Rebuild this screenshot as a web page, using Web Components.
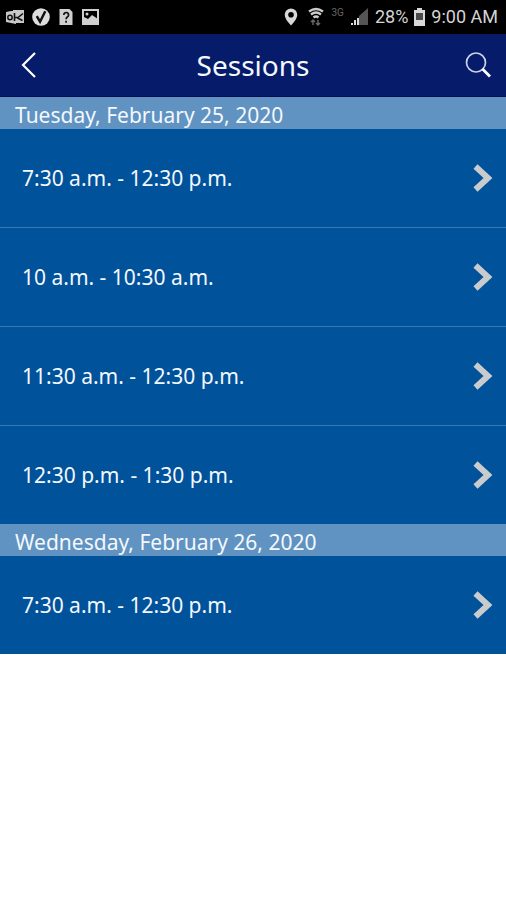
<!DOCTYPE html>
<html lang="en">
<head>
<meta charset="utf-8">
<meta name="viewport" content="width=device-width, initial-scale=1">
<title>Sessions</title>
<style>
  body { margin: 0; background: #fff; color: #f4f8fc; font-family: "Noto Sans", "Open Sans", sans-serif; }
</style>
</head>
<body>
<status-bar></status-bar>
<app-bar>Sessions</app-bar>
<main>
  <session-day>
    <span slot="date">Tuesday, February 25, 2020</span>
    <session-row>7:30 a.m. - 12:30 p.m.</session-row>
    <session-row>10 a.m. - 10:30 a.m.</session-row>
    <session-row>11:30 a.m. - 12:30 p.m.</session-row>
    <session-row>12:30 p.m. - 1:30 p.m.</session-row>
  </session-day>
  <session-day>
    <span slot="date">Wednesday, February 26, 2020</span>
    <session-row>7:30 a.m. - 12:30 p.m.</session-row>
  </session-day>
</main>
<script>
function define(name, html) {
  const template = document.createElement('template');
  template.innerHTML = html;
  customElements.define(name, class extends HTMLElement {
    constructor() {
      super();
      this.attachShadow({ mode: 'open' }).append(template.content.cloneNode(true));
    }
  });
}

define('status-bar', `
  <style>
    :host { display: flex; align-items: center; justify-content: space-between; height: 34px; padding: 0 8px 0 6px; box-sizing: border-box; background: #000; color: #d4d4d4; font: 18px/24px Roboto, sans-serif; white-space: nowrap; }
    .group { display: flex; align-items: center; }
    .left { gap: 8px; }
    svg { display: block; flex: none; }
    .net { font-size: 10px; line-height: 12px; color: #666; padding: 0 7px 8px 8px; }
    .wifi { margin-left: 10px; }
    .percent { margin-left: 6px; }
    .battery { margin: 0 5px; }
  </style>
  <div class="group left">
    <svg width="18" height="18" viewBox="0 0 18 18"><path d="M7 2h11v13H7zM0 4l10-2v14L0 14z" fill="#c8c8c8"/><circle cx="4" cy="9.500" r="2.200" fill="none" stroke="#111" stroke-width="1.500"/><path d="M8.500 5v8M17 5.500l-5 4H8.500M11.500 10l5 2.500" fill="none" stroke="#111" stroke-width="1.600"/></svg>
    <svg width="18" height="20" viewBox="0 0 19 20"><circle cx="9.500" cy="10" r="9.300" fill="#dedede"/><path d="M5 9l3.500 6L14 4" fill="none" stroke="#111" stroke-width="2.600"/></svg>
    <svg width="16" height="18" viewBox="5 0 16 18"><path d="M6.500 1h10l3 3v13h-13z" fill="#d0d0d0"/><path d="M10.800 7q.2-2.500 2.400-2.500t2.400 2.500q0 1.200-1.300 2-1.200.8-1.200 2.200M13.100 12.700v2" fill="none" stroke="#111" stroke-width="1.700"/></svg>
    <svg width="18" height="18" viewBox="0 0 18 18"><rect x="1" y="2" width="15" height="14" fill="none" stroke="#d0d0d0" stroke-width="2"/><path d="M2 14V9l4 2 4-4 6 4v4H2z" fill="#d0d0d0"/><circle cx="5" cy="6" r="1.500" fill="#d0d0d0"/></svg>
  </div>
  <div class="group">
    <svg width="14" height="18" viewBox="0 0 14 18"><path fill-rule="evenodd" d="M7 .5a6.300 6.300 0 0 1 6.300 6.300Q13.300 11 7 17.500.7 11 .7 6.800A6.300 6.300 0 0 1 7 .5zM7 4a2.800 2.800 0 1 0 0 5.600A2.800 2.800 0 0 0 7 4z" fill="#d8d8d8"/></svg>
    <svg class="wifi" width="16" height="20" viewBox="0 0 16 20"><path d="M1 4.500q7-5 14 0M3 7.500q5-4 10 0M5.500 10.500q2.500-2 5 0" fill="none" stroke="#ccc" stroke-width="2.300"/><path d="M5 18v-5M3 15l2-2 2 2M10 13v5M8 16l2 2 2-2" fill="none" stroke="#666" stroke-width="1.500"/></svg>
    <span class="net">3G</span>
    <svg width="18" height="18" viewBox="0 0 18 18"><path d="M8 8l9-8v17H8z" fill="#555"/><path d="M0 15h2v2H0zM3 12h2v5H3zM6 10h2v7H6z" fill="#ddd"/></svg>
    <span class="percent">28%</span>
    <svg class="battery" width="13" height="18" viewBox="0 0 13 18"><path d="M4 0h5v2h3v16H1V2h3z" fill="#d8d8d8"/><path d="M3 5h7v7H3z" fill="#4a4a4a"/></svg>
    <span>9:00 AM</span>
  </div>`);

define('app-bar', `
  <style>
    :host { display: grid; grid-template-columns: 56px 1fr 56px; align-items: center; height: 63px; box-sizing: border-box; background: #061c6a; border-bottom: 1px solid #040f58; }
    h1 { margin: 0; text-align: center; font-size: 28px; line-height: 36px; font-weight: 400; }
    button { display: flex; align-items: center; justify-content: center; height: 48px; padding: 0; border: 0; background: none; color: inherit; }
  </style>
  <button aria-label="Back"><svg width="18" height="28" viewBox="0 0 18 28"><path d="M16 2L4 14l12 12" fill="none" stroke="#fff" stroke-width="2.200"/></svg></button>
  <h1><slot></slot></h1>
  <button aria-label="Search"><svg width="26" height="26" viewBox="0 0 26 26"><circle cx="11" cy="10.500" r="9.500" fill="none" stroke="#cdd2ec" stroke-width="1.700"/><path d="M17.500 17l7.500 7.500" stroke="#fff" stroke-width="2.800"/></svg></button>`);

define('session-day', `
  <style>
    :host { display: block; }
    h2 { margin: 0; padding: 4px 15px 0; background: #6093c2; font-size: 21px; line-height: 28px; font-weight: 400; }
    ::slotted(session-row:not(:last-child)) { border-bottom: 1px solid #3b78b2; }
  </style>
  <h2><slot name="date"></slot></h2>
  <slot></slot>`);

define('session-row', `
  <style>
    :host { display: block; background: #00529b; }
    button { display: flex; align-items: center; justify-content: space-between; width: 100%; height: 98px; padding: 0 13px 0 22px; border: 0; background: none; color: inherit; font: inherit; font-size: 21px; line-height: 30px; text-align: left; }
    svg { display: block; flex: none; }
  </style>
  <button><span><slot></slot></span><svg width="22" height="30" viewBox="0 0 22 30"><path d="M4.500 3.500L17 15 4.500 26.500" fill="none" stroke="#c9cbcd" stroke-width="6"/></svg></button>`);
</script>
</body>
</html>
